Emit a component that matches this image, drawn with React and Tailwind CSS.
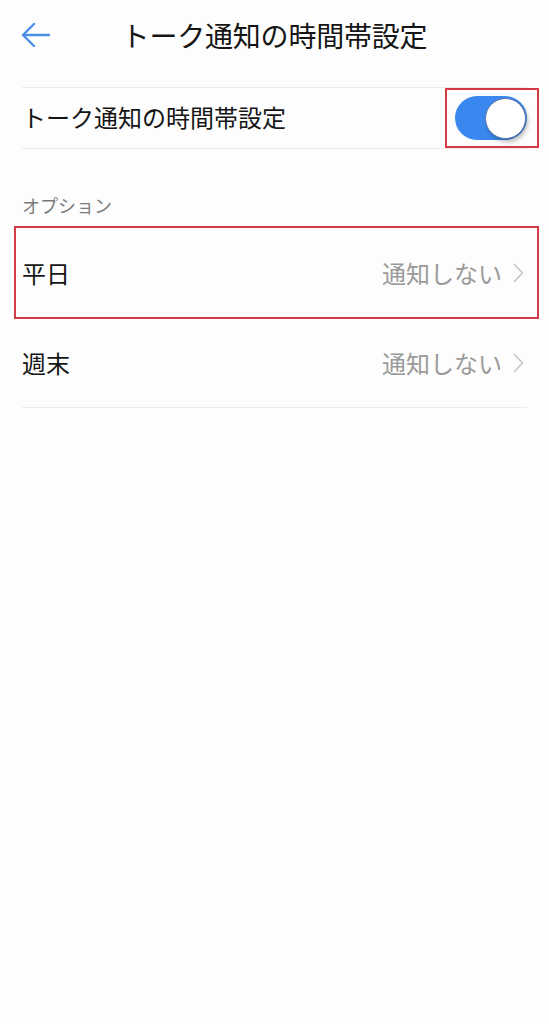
import React from "react";

const Chevron = () => (
  <svg width="11" height="20" viewBox="0 0 11 20" fill="none" className="shrink-0">
    <path d="M1.5 1.5L9.5 10L1.5 18.5" stroke="#c4c4c4" strokeWidth="1.6" strokeLinecap="round" strokeLinejoin="round" />
  </svg>
);

const BackArrow = () => (
  <svg width="30" height="26" viewBox="0 0 30 26" fill="none">
    <path d="M28 13H3M13 2L2 13L13 24" stroke="#4a8fe7" strokeWidth="2.4" strokeLinecap="round" strokeLinejoin="round" />
  </svg>
);

const Toggle = () => (
  <div className="w-[72px] h-[44px] rounded-full bg-[#3a88ef] flex items-center justify-end pr-[1px]">
    <div className="w-[41px] h-[41px] rounded-full bg-white border border-[#5a74a8] shadow-[2px_3px_4px_rgba(0,0,0,0.25)]" />
  </div>
);

export default function App() {
  return (
    <div className="min-h-screen w-full bg-[#fdfdfd] text-[#151515] font-['Noto_Sans_CJK_JP','Noto_Sans',sans-serif]">
      {/* header */}
      <div className="grid grid-cols-[70px_1fr_70px] items-center h-[70px]">
        <div className="pl-[21px] flex items-center">
          <BackArrow />
        </div>
        <h1 className="text-center text-[28px] leading-none tracking-[-0.2px]">トーク通知の時間帯設定</h1>
        <div />
      </div>

      <div className="mx-[22px] mt-[17px]">
        {/* main toggle row */}
        <div className="flex items-center justify-between h-[62px] border-y border-[#ececec]">
          <span className="text-[24px] leading-none pb-[2px]">トーク通知の時間帯設定</span>
          <div className="-mr-[12px] w-[94px] h-full border-2 border-[#d23a44] flex items-center pl-[8px]">
            <Toggle />
          </div>
        </div>

        <div className="mt-[44px] h-[24px] flex items-center text-[18px] text-[#7a7a7a] leading-none">
          オプション
        </div>

        {/* weekday row */}
        <div className="mt-[9px] -ml-[8px] -mr-[12px] h-[93px] border-2 border-[#d23a44] flex items-center justify-between pl-[6px] pr-[13px]">
          <span className="text-[24px] leading-none">平日</span>
          <div className="flex items-center gap-[11px]">
            <span className="text-[24px] leading-none text-[#9a9a9a]">通知しない</span>
            <Chevron />
          </div>
        </div>

        {/* weekend row */}
        <div className="h-[89px] border-b border-[#ececec] flex items-center justify-between">
          <span className="text-[24px] leading-none">週末</span>
          <div className="flex items-center gap-[11px] pr-[3px]">
            <span className="text-[24px] leading-none text-[#9a9a9a]">通知しない</span>
            <Chevron />
          </div>
        </div>
      </div>
    </div>
  );
}
